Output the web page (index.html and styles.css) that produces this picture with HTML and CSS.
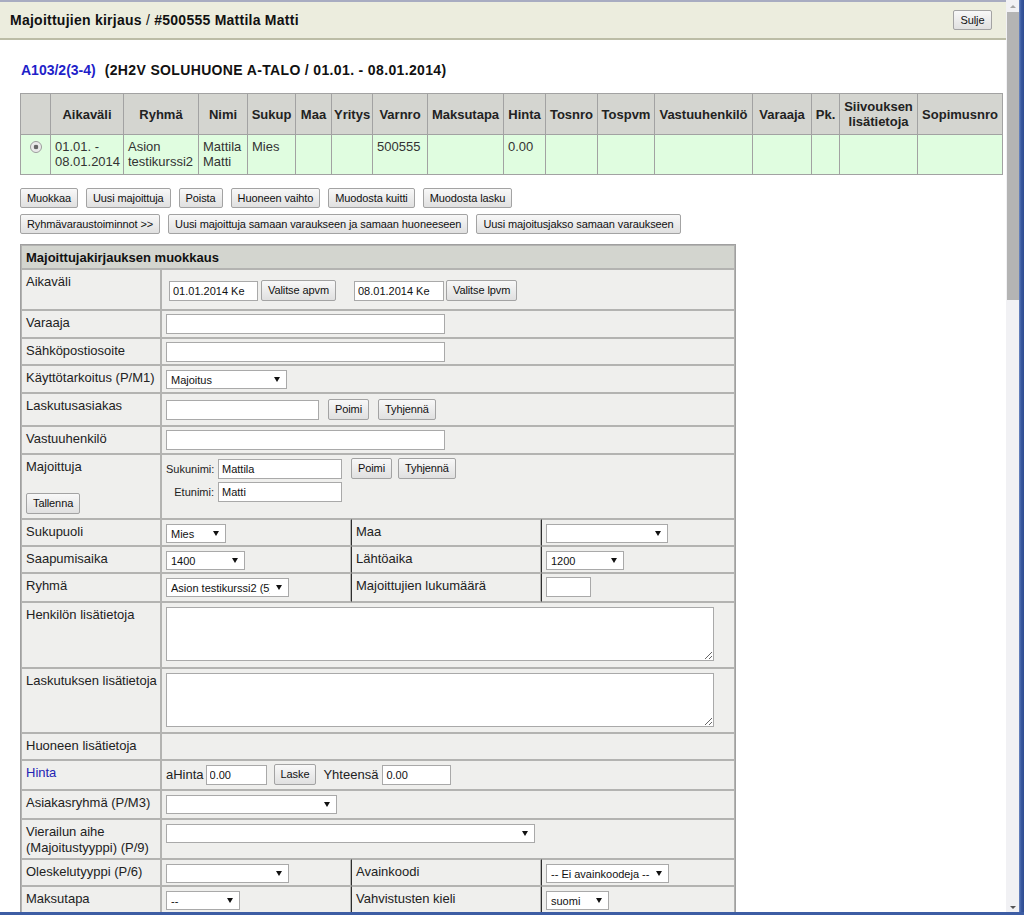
FILE: index.html
```html
<!DOCTYPE html>
<html lang="fi">
<head>
<meta charset="utf-8">
<title>Majoittujien kirjaus</title>
<link rel="stylesheet" href="styles.css">
</head>
<body>
<div class="window">
  <div class="page">
    <header class="titlebar">
      <h1 class="title">Majoittujien kirjaus <span class="title-sep">/</span> #500555 Mattila Matti</h1>
      <button class="btn btn-close">Sulje</button>
    </header>
    <main class="content">
      <h2 class="room"><a href="#" class="room-link">A103/2(3-4)</a><span class="room-desc">(2H2V SOLUHUONE A-TALO / 01.01. - 08.01.2014)</span></h2>

      <table class="list">
        <colgroup>
          <col class="lc-30"><col class="lc-73"><col class="lc-75"><col class="lc-49"><col class="lc-48"><col class="lc-36"><col class="lc-41"><col class="lc-55"><col class="lc-76"><col class="lc-42"><col class="lc-52"><col class="lc-57"><col class="lc-98"><col class="lc-59"><col class="lc-28"><col class="lc-78"><col class="lc-85">
        </colgroup>
        <thead>
          <tr>
            <th></th><th>Aikaväli</th><th>Ryhmä</th><th>Nimi</th><th>Sukup</th><th>Maa</th><th>Yritys</th><th>Varnro</th><th>Maksutapa</th><th>Hinta</th><th>Tosnro</th><th>Tospvm</th><th>Vastuuhenkilö</th><th>Varaaja</th><th>Pk.</th><th>Siivouksen<br>lisätietoja</th><th>Sopimusnro</th>
          </tr>
        </thead>
        <tbody>
          <tr>
            <td class="radio-cell"><span class="radio"></span></td>
            <td>01.01. -<br>08.01.2014</td>
            <td>Asion<br>testikurssi2</td>
            <td>Mattila<br>Matti</td>
            <td>Mies</td>
            <td></td>
            <td></td>
            <td>500555</td>
            <td></td>
            <td>0.00</td>
            <td></td><td></td><td></td><td></td><td></td><td></td><td></td>
          </tr>
        </tbody>
      </table>

      <div class="actions">
        <button class="btn">Muokkaa</button>
        <button class="btn">Uusi majoittuja</button>
        <button class="btn">Poista</button>
        <button class="btn">Huoneen vaihto</button>
        <button class="btn">Muodosta kuitti</button>
        <button class="btn">Muodosta lasku</button>
      </div>
      <div class="actions actions-2">
        <button class="btn">Ryhmävaraustoiminnot &gt;&gt;</button>
        <button class="btn">Uusi majoittuja samaan varaukseen ja samaan huoneeseen</button>
        <button class="btn">Uusi majoitusjakso samaan varaukseen</button>
      </div>

      <table class="form">
        <colgroup><col class="fc-lab"><col class="fc-2"><col class="fc-3"><col class="fc-4"></colgroup>
        <thead>
          <tr><th colspan="4" class="form-title">Majoittujakirjauksen muokkaus</th></tr>
        </thead>
        <tbody>
          <tr class="r-41">
            <td class="lab">Aikaväli</td>
            <td class="val val-dates" colspan="3">
              <div class="line">
                <input class="inp w-89" type="text" value="01.01.2014 Ke">
                <button class="btn sp-3">Valitse apvm</button>
                <input class="inp w-90 sp-18" type="text" value="08.01.2014 Ke">
                <button class="btn sp-2">Valitse lpvm</button>
              </div>
            </td>
          </tr>
          <tr class="r-28">
            <td class="lab">Varaaja</td>
            <td class="val" colspan="3"><div class="line"><input class="inp w-279" type="text" value=""></div></td>
          </tr>
          <tr class="r-27">
            <td class="lab">Sähköpostiosoite</td>
            <td class="val" colspan="3"><div class="line"><input class="inp w-279" type="text" value=""></div></td>
          </tr>
          <tr class="r-28">
            <td class="lab">Käyttötarkoitus (P/M1)</td>
            <td class="val" colspan="3"><div class="line"><span class="select w-121"><select><option>Majoitus</option></select></span></div></td>
          </tr>
          <tr class="r-33">
            <td class="lab">Laskutusasiakas</td>
            <td class="val val-mid" colspan="3">
              <div class="line">
                <input class="inp w-153" type="text" value="">
                <button class="btn sp-9">Poimi</button>
                <button class="btn sp-9">Tyhjennä</button>
              </div>
            </td>
          </tr>
          <tr class="r-28">
            <td class="lab">Vastuuhenkilö</td>
            <td class="val" colspan="3"><div class="line"><input class="inp w-279" type="text" value=""></div></td>
          </tr>
          <tr class="r-65">
            <td class="lab">Majoittuja<button class="btn btn-save">Tallenna</button></td>
            <td class="val" colspan="3">
              <div class="person">
                <span class="plabel">Sukunimi:</span>
                <input class="inp w-124" type="text" value="Mattila">
                <span class="pbtns"><button class="btn">Poimi</button><button class="btn sp-6">Tyhjennä</button></span>
                <span class="plabel">Etunimi:</span>
                <input class="inp w-124" type="text" value="Matti">
              </div>
            </td>
          </tr>
          <tr class="r-27">
            <td class="lab">Sukupuoli</td>
            <td class="val"><div class="line"><span class="select w-60"><select><option>Mies</option></select></span></div></td>
            <td class="lab lab2">Maa</td>
            <td class="val val2"><div class="line"><span class="select w-122"><select><option></option></select></span></div></td>
          </tr>
          <tr class="r-27">
            <td class="lab">Saapumisaika</td>
            <td class="val"><div class="line"><span class="select w-79"><select><option>1400</option></select></span></div></td>
            <td class="lab lab2">Lähtöaika</td>
            <td class="val val2"><div class="line"><span class="select w-78"><select><option>1200</option></select></span></div></td>
          </tr>
          <tr class="r-29">
            <td class="lab">Ryhmä</td>
            <td class="val"><div class="line"><span class="select w-123"><select><option>Asion testikurssi2 (5)</option></select></span></div></td>
            <td class="lab lab2">Majoittujien lukumäärä</td>
            <td class="val val2"><div class="line"><input class="inp w-45" type="text" value=""></div></td>
          </tr>
          <tr class="r-66">
            <td class="lab">Henkilön lisätietoja</td>
            <td class="val" colspan="3"><textarea class="area"></textarea></td>
          </tr>
          <tr class="r-65">
            <td class="lab">Laskutuksen lisätietoja</td>
            <td class="val" colspan="3"><textarea class="area"></textarea></td>
          </tr>
          <tr class="r-27">
            <td class="lab">Huoneen lisätietoja</td>
            <td class="val" colspan="3"></td>
          </tr>
          <tr class="r-30">
            <td class="lab"><a href="#" class="lab-link">Hinta</a></td>
            <td class="val" colspan="3">
              <div class="line">
                <span class="txt">aHinta</span>
                <input class="inp w-61 sp-2" type="text" value="0.00">
                <button class="btn sp-7">Laske</button>
                <span class="txt sp-7">Yhteensä</span>
                <input class="inp w-69 sp-4" type="text" value="0.00">
              </div>
            </td>
          </tr>
          <tr class="r-29">
            <td class="lab">Asiakasryhmä (P/M3)</td>
            <td class="val" colspan="3"><div class="line"><span class="select w-171"><select><option></option></select></span></div></td>
          </tr>
          <tr class="r-40">
            <td class="lab">Vierailun aihe<br>(Majoitustyyppi) (P/9)</td>
            <td class="val" colspan="3"><div class="line"><span class="select w-369"><select><option></option></select></span></div></td>
          </tr>
          <tr class="r-27">
            <td class="lab">Oleskelutyyppi (P/6)</td>
            <td class="val"><div class="line"><span class="select w-123"><select><option></option></select></span></div></td>
            <td class="lab lab2">Avainkoodi</td>
            <td class="val val2"><div class="line"><span class="select w-123"><select><option>-- Ei avainkoodeja --</option></select></span></div></td>
          </tr>
          <tr class="r-27">
            <td class="lab">Maksutapa</td>
            <td class="val"><div class="line"><span class="select w-74"><select><option>--</option></select></span></div></td>
            <td class="lab lab2">Vahvistusten kieli</td>
            <td class="val val2"><div class="line"><span class="select w-63"><select><option>suomi</option></select></span></div></td>
          </tr>
        </tbody>
      </table>
    </main>
  </div>
  <div class="scrollbar" aria-hidden="true">
    <span class="sb-up"></span>
    <span class="sb-thumb"></span>
    <span class="sb-track"></span>
    <span class="sb-down"></span>
  </div>
  <div class="frame-right"></div>
</div>
<div class="frame-bottom"></div>
</body>
</html>
```

FILE: styles.css
```css
* { box-sizing: border-box; }
html, body { margin: 0; padding: 0; }
body {
  width: 1024px;
  height: 915px;
  overflow: hidden;
  background: #fff;
  font-family: "Liberation Sans", Arial, sans-serif;
  font-size: 13px;
  color: #222;
}

.window { display: flex; height: 912px; }
.page { width: 1006px; flex: none; overflow: hidden; }

/* title bar */
.titlebar {
  height: 40px;
  display: flex;
  align-items: center;
  justify-content: space-between;
  padding: 0 14px 0 10px;
  background: #ecedde;
  border-top: 2px solid #a8acc1;
  border-bottom: 2px solid #bcbda6;
}
.title { margin: 0; font-size: 14px; font-weight: bold; color: #111; line-height: 18px; letter-spacing: 0.25px; }
.title-sep { font-weight: normal; }

/* buttons */
.btn {
  font-family: "Liberation Sans", Arial, sans-serif;
  font-size: 11px;
  color: #111;
  height: 21px;
  padding: 0 6px;
  margin: 0;
  border: 1px solid #a3a3a3;
  border-radius: 2px;
  background: linear-gradient(#f8f8f8, #e0e0e0);
  line-height: 19px;
  white-space: nowrap;
  letter-spacing: -0.1px;
}
.btn-close { width: 39px; height: 20px; padding: 0; }

.content { padding-left: 20px; }
.room { margin: 21px 0 0 1px; font-size: 14px; font-weight: bold; line-height: 18px; color: #111; }
.room-link { color: #1f1fc9; text-decoration: none; margin-right: 9px; }
.room-desc { letter-spacing: 0.35px; }

/* list table */
.list {
  margin-top: 14px;
  width: 982px;
  table-layout: fixed;
  border-collapse: collapse;
  border: 1px solid #9f9f9f;
}
.list th, .list td { border: 1px solid #a2a2a2; }
.list th {
  height: 41px;
  background: #d4d5d0;
  font-weight: bold;
  font-size: 13px;
  line-height: 15px;
  color: #222;
  text-align: center;
  vertical-align: middle;
  padding: 0 2px;
  white-space: nowrap;
}
.list td {
  height: 40px;
  background: #e0fde0;
  vertical-align: top;
  padding: 4px 4px 0;
  line-height: 15px;
  color: #333;
}
.list td.radio-cell { text-align: center; padding: 6px 0 0; }
.radio {
  display: inline-block;
  width: 12px;
  height: 12px;
  border-radius: 50%;
  border: 1px solid #9c9c9c;
  background: radial-gradient(circle, #666 0, #666 2px, #e6e6e6 2.6px, #f4f4f4 100%);
}
.lc-30 { width: 30px; } .lc-73 { width: 73px; } .lc-75 { width: 75px; } .lc-49 { width: 49px; }
.lc-48 { width: 48px; } .lc-36 { width: 36px; } .lc-41 { width: 41px; } .lc-55 { width: 55px; }
.lc-76 { width: 76px; } .lc-42 { width: 42px; } .lc-52 { width: 52px; } .lc-57 { width: 57px; }
.lc-98 { width: 98px; } .lc-59 { width: 59px; } .lc-28 { width: 28px; } .lc-78 { width: 78px; }
.lc-85 { width: 85px; }

/* action buttons */
.actions { display: flex; gap: 8px; margin-top: 13px; }
.actions .btn { height: 20px; line-height: 18px; }
.actions-2 { margin-top: 6px; }

/* form table */
.form {
  margin-top: 10px;
  width: 716px;
  table-layout: fixed;
  border-collapse: separate;
  border-spacing: 0;
  border: 1px solid #a0a0a0;
  background: #efefed;
}
.fc-lab { width: 140px; } .fc-2 { width: 190px; } .fc-3 { width: 190px; } .fc-4 { width: 194px; }
.form th, .form td { border: 1px solid #b3b3b1; }
.form-title {
  height: 24px;
  background: #d3d5cf;
  text-align: left;
  padding: 0 4px;
  font-weight: bold;
  font-size: 13px;
  color: #111;
}
.form td { height: 27px; vertical-align: top; background: #efefed; }
.r-28 > td { height: 28px; }
.r-29 > td { height: 29px; }
.r-30 > td { height: 30px; }
.r-33 > td { height: 33px; }
.r-40 > td { height: 40px; }
.r-41 > td { height: 41px; }
.r-65 > td { height: 65px; }
.r-66 > td { height: 66px; }

.lab { padding: 4px 4px 0; line-height: 16px; white-space: nowrap; color: #222; }
.lab2 { border-left-color: #2e2e2e !important; }
.val2 { border-left-color: #2e2e2e !important; }
.lab-link { color: #2424b4; text-decoration: none; }
.val { padding: 3px 4px 0; }
.val-dates { padding-top: 10px; padding-left: 7px; }
.val-mid { padding-top: 5px; }
.line { display: flex; align-items: center; }
.txt { font-size: 13px; color: #222; }

.btn-save { display: block; margin-top: 18px; }

/* inputs */
.inp {
  height: 20px;
  border: 1px solid #a9a9a9;
  background: #fff;
  font-family: "Liberation Sans", Arial, sans-serif;
  font-size: 11px;
  color: #111;
  padding: 0 3px;
  margin: 0;
}
.area {
  display: block;
  width: 548px;
  height: 54px;
  margin: 1px 0 0;
  border: 1px solid #a9a9a9;
  background: #fff;
  font-family: "Liberation Sans", Arial, sans-serif;
  font-size: 11px;
}

.select { position: relative; display: inline-block; height: 19px; margin-top: 1px; }
.select select {
  appearance: none;
  -webkit-appearance: none;
  width: 100%;
  height: 19px;
  border: 1px solid #a9a9a9;
  border-radius: 0;
  background: #fff;
  font-family: "Liberation Sans", Arial, sans-serif;
  font-size: 11px;
  color: #111;
  padding: 0 18px 0 4px;
  margin: 0;
}
.select::after {
  content: "";
  position: absolute;
  right: 7px;
  top: 7px;
  border-left: 3.5px solid transparent;
  border-right: 3.5px solid transparent;
  border-top: 5px solid #111;
  pointer-events: none;
}

.person {
  display: grid;
  grid-template-columns: 48px 124px auto;
  column-gap: 4px;
  row-gap: 3px;
  align-items: center;
}
.plabel { font-size: 11px; color: #222; text-align: right; }
.pbtns { display: flex; margin-left: 5px; }

/* widths & spacing */
.w-45 { width: 45px; } .w-60 { width: 60px; } .w-61 { width: 61px; } .w-63 { width: 63px; }
.w-69 { width: 69px; } .w-74 { width: 74px; } .w-78 { width: 78px; } .w-79 { width: 79px; }
.w-89 { width: 89px; } .w-90 { width: 90px; } .w-121 { width: 121px; } .w-122 { width: 122px; }
.w-123 { width: 123px; } .w-124 { width: 124px; } .w-153 { width: 153px; } .w-171 { width: 171px; }
.w-279 { width: 279px; } .w-369 { width: 369px; }
.sp-2 { margin-left: 2px; } .sp-3 { margin-left: 3px; } .sp-4 { margin-left: 4px; }
.sp-6 { margin-left: 6px; } .sp-7 { margin-left: 7px; } .sp-9 { margin-left: 9px; }
.sp-18 { margin-left: 18px; }

/* window chrome */
.scrollbar {
  width: 13px;
  flex: none;
  display: flex;
  flex-direction: column;
  align-items: center;
  background: #f1f1f4;
}
.sb-up {
  width: 0; height: 0;
  margin-top: 5px;
  border-left: 3px solid transparent;
  border-right: 3px solid transparent;
  border-bottom: 3px solid #a5a5a5;
}
.sb-thumb { width: 12px; height: 288px; margin-top: 4px; background: #b4b4b4; }
.sb-track { flex: 1; }
.sb-down {
  width: 0; height: 0;
  margin-bottom: 3px;
  border-left: 3px solid transparent;
  border-right: 3px solid transparent;
  border-top: 3px solid #555;
}
.frame-right { width: 5px; flex: none; background: linear-gradient(to right, #6d88c2, #3a5aa0 40%, #2d4b90); }
.frame-bottom { height: 3px; background: #3d5da4; }
```
